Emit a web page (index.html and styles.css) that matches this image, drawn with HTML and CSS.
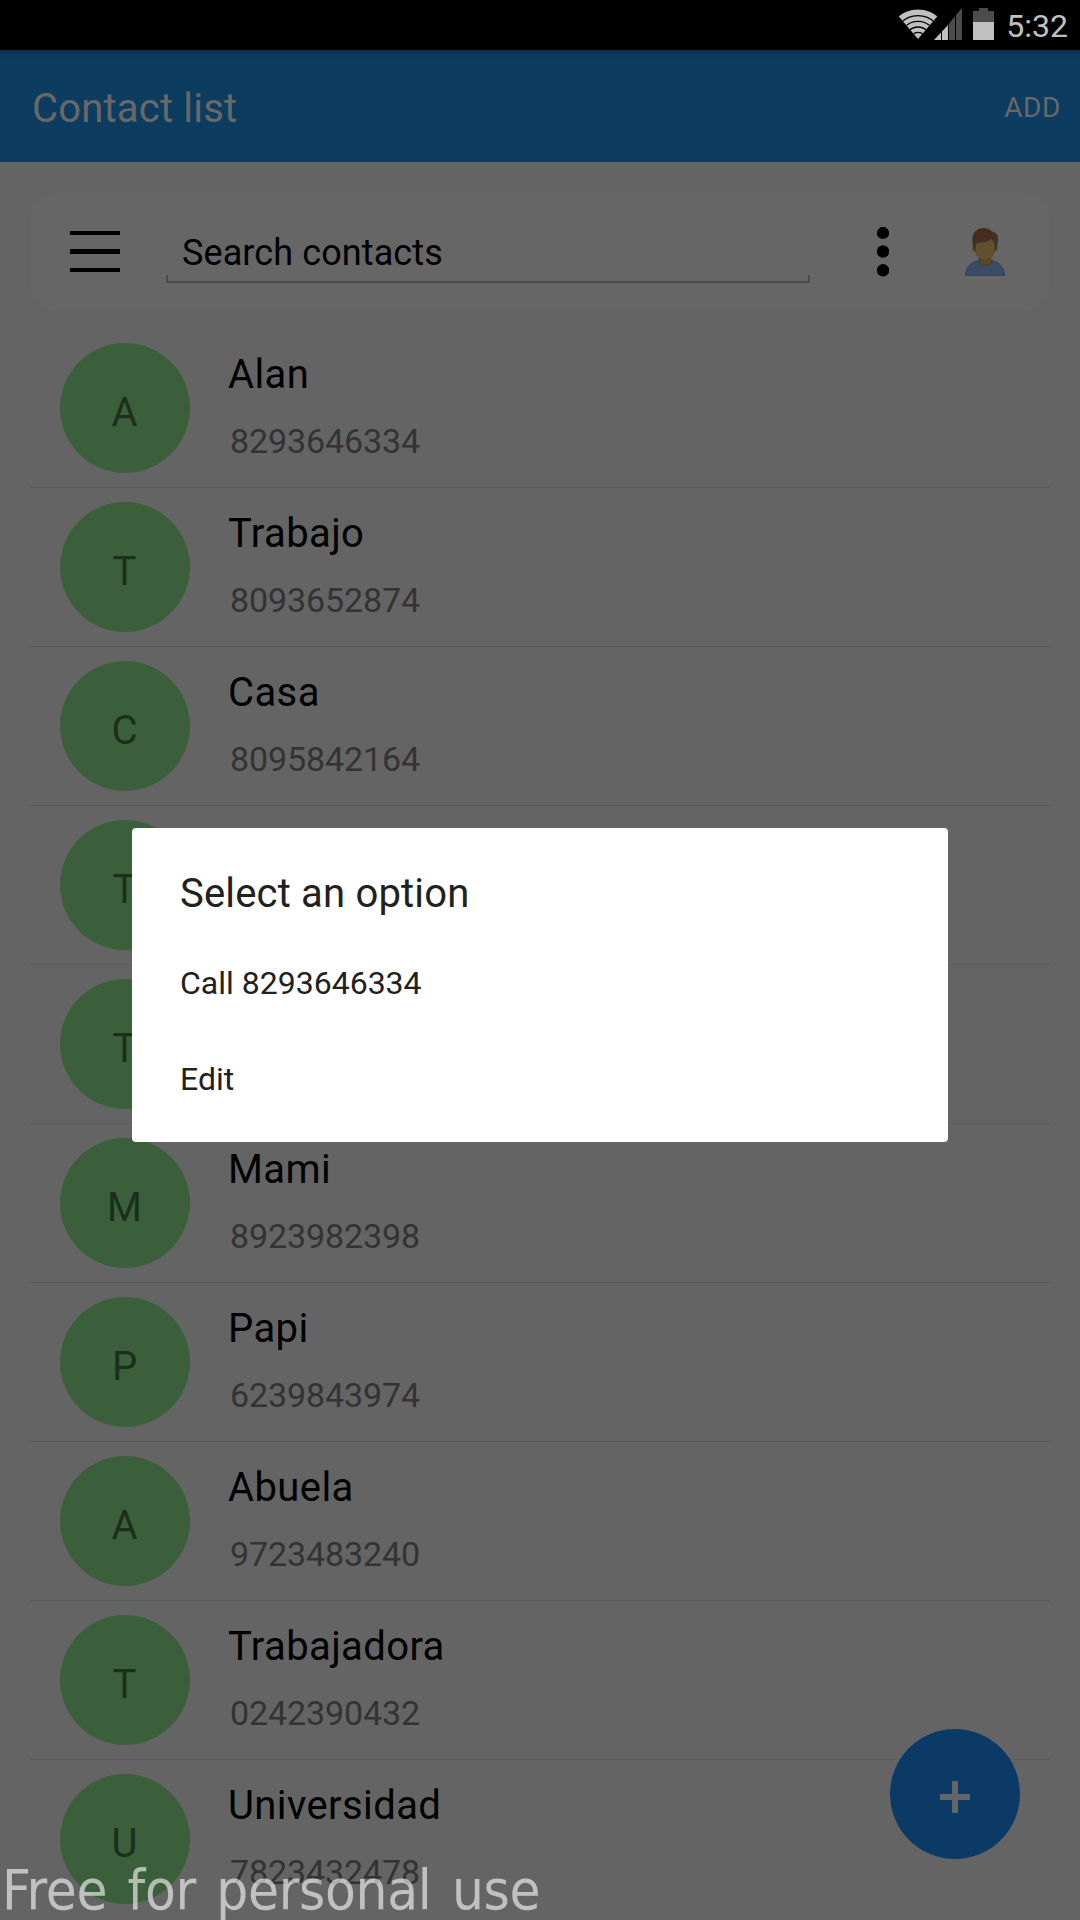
FILE: index.html
```html
<!DOCTYPE html>
<html lang="en">
<head>
<meta charset="utf-8">
<title>Contact list</title>
<link rel="stylesheet" href="styles.css">
</head>
<body>
<div class="screen">
  <div class="statusbar">
    <svg class="wifi" width="40" height="30" viewBox="0 0 40 30">
      <defs><clipPath id="fan"><path d="M20 30L0 6.5Q0 0 20 0Q40 0 40 6.5Z"/></clipPath></defs>
      <g clip-path="url(#fan)">
        <circle cx="20" cy="31" r="30.500" fill="#c0c0c0"/>
        <g fill="none" stroke="#000" stroke-width="1.3">
          <circle cx="20" cy="31" r="24.3"/><circle cx="20" cy="31" r="18.6"/><circle cx="20" cy="31" r="13"/><circle cx="20" cy="31" r="7.6"/>
        </g>
      </g>
    </svg>
    <svg class="signal" width="28" height="32" viewBox="0 0 28 32">
      <path fill="#c0c0c0" d="M0 32L7 24.5V32ZM8 23.5L14 17V32H8Z"/>
      <path fill="#4c4c4c" d="M15 15.5L21 8.5V32H15ZM22 7L28 0V32H22Z"/>
    </svg>
    <svg class="battery" width="21" height="32" viewBox="0 0 21 32">
      <path fill="#4c4c4c" d="M6 0H15V3H21V14H0V3H6Z"/>
      <path fill="#c0c0c0" d="M0 14H21V32H0Z"/>
    </svg>
    <span class="time">5:32</span>
  </div>
  <header class="appbar">
    <h1 class="title">Contact list</h1>
    <span class="add">ADD</span>
  </header>
  <main class="content">
    <div class="search">
      <svg class="menu" width="50" height="41" viewBox="0 0 50 41"><path d="M0 0H50V4H0ZM0 18H50V23H0ZM0 37H50V41H0Z"/></svg>
      <div class="field"><span class="query">Search contacts</span></div>
      <svg class="more" width="12" height="50" viewBox="0 0 12 50"><circle cx="6" cy="6" r="6.1"/><circle cx="6" cy="24.5" r="6.2"/><circle cx="6" cy="43.3" r="6.2"/></svg>
      <svg class="person" width="40" height="48" viewBox="0 0 40 48">
        <path d="M.4 47.6C.6 39.5 6 33.2 14 32.6H26C34 33.2 39.4 39.5 39.6 47.6Z" fill="#3b4b66" stroke="#2f4260" stroke-width=".9"/>
        <path d="M14.2 30V35C16 38.2 24.300 38.200 26 35V30Z" fill="#594825" stroke="#493b20" stroke-width=".7"/>
        <path d="M8.500 17Q6.300 19 7.500 22Q8.200 24 10 24L10.500 17ZM31.500 17Q33.600 19 32.400 22Q31.600 24 30 24L29.500 17Z" fill="#5c4a28"/>
        <path d="M10 11H30V20C30 26.500 25 32.200 20 32.200S10 26.500 10 20Z" fill="#614f2d" stroke="#51421f" stroke-width=".6"/>
        <path d="M9.800 23L8.600 18.500C7.500 14 7 9 9 5.500C11.500 1.500 15.500 .3 19 .3C23 .3 25.200 1.800 27 4C30.500 4.300 32.400 6.500 32.700 9.500C33 13 32 16 31.500 18.500L30.300 22V17.500C29.500 14.500 28.500 12.500 26 10.500C23.500 13 20.500 13.900 17 14C13 14 11 14.700 10.200 16.500Z" fill="#472d20" stroke="#3c281c" stroke-width=".5"/>
      </svg>
    </div>
    <ul class="list">
      <li class="row"><span class="avatar">A</span><div class="info"><span class="name">Alan</span><span class="phone">8293646334</span></div></li>
      <li class="row"><span class="avatar">T</span><div class="info"><span class="name">Trabajo</span><span class="phone">8093652874</span></div></li>
      <li class="row"><span class="avatar">C</span><div class="info"><span class="name">Casa</span><span class="phone">8095842164</span></div></li>
      <li class="row"><span class="avatar">T</span></li>
      <li class="row"><span class="avatar">T</span></li>
      <li class="row"><span class="avatar">M</span><div class="info"><span class="name">Mami</span><span class="phone">8923982398</span></div></li>
      <li class="row"><span class="avatar">P</span><div class="info"><span class="name">Papi</span><span class="phone">6239843974</span></div></li>
      <li class="row"><span class="avatar">A</span><div class="info"><span class="name">Abuela</span><span class="phone">9723483240</span></div></li>
      <li class="row"><span class="avatar">T</span><div class="info"><span class="name">Trabajadora</span><span class="phone">0242390432</span></div></li>
      <li class="row"><span class="avatar">U</span><div class="info"><span class="name">Universidad</span><span class="phone">7823432478</span></div></li>
    </ul>
  </main>
  <div class="fab"><svg width="30" height="32" viewBox="0 0 30 32"><path fill="#646464" d="M12 0H18V13H30V19H18V32H12V19H0V13H12Z"/></svg></div>
  <div class="dialog">
    <h2 class="heading">Select an option</h2>
    <span class="option">Call 8293646334</span>
    <span class="option">Edit</span>
  </div>
  <div class="watermark">Free for personal use</div>
</div>
</body>
</html>
```
FILE: styles.css
```css
* { box-sizing: border-box; }
body { margin: 0; font-family: Roboto, sans-serif; background: #646464; }
.screen { position: relative; width: 1080px; height: 1920px; overflow: hidden; background: #646464; }
svg { display: block; flex: none; }
.statusbar { display: flex; height: 50px; background: #000; padding: 8px 12px 0 0; justify-content: flex-end; }
.wifi { margin: 1px -4px 0 0; }
.signal { margin-right: 11px; }
.battery { margin-right: 12px; }
.time { font-size: 32px; line-height: 36px; color: #c0c0c0; white-space: nowrap; }
.appbar { display: flex; align-items: center; justify-content: space-between; height: 112px; padding: 4px 19px 0 32px; background: linear-gradient(#0b2c47, #0d3a5f 5px, #0c3c60 14px); color: #686868; }
.title { margin: 2px 0 0; font-size: 40px; font-weight: 400; line-height: 48px; letter-spacing: .2px; }
.add { font-size: 28px; line-height: 36px; letter-spacing: .6px; }
.content { padding: 30px 30px 0; }
.search { display: flex; height: 119px; border-radius: 30px; background: #666; padding-left: 40px; }
.menu { margin-top: 39px; }
.field { width: 644px; height: 91px; margin-left: 46px; padding: 40px 0 0 16px; line-height: 42px; font-size: 36px; letter-spacing: .1px;
  background: linear-gradient(#4c4c4c, #4c4c4c) 0 100% / 100% 2px no-repeat, linear-gradient(#4c4c4c, #4c4c4c) 0 100% / 2px 8px no-repeat, linear-gradient(#4c4c4c, #4c4c4c) 100% 100% / 2px 8px no-repeat; }
.more { margin: 35px 0 0 67px; }
.person { margin: 35.5px 0 0 76px; }
.list { list-style: none; margin: 18px 0 0; padding: 0; }
.row { display: flex; height: 159px; padding: 14px 30px 0; border-bottom: 1px solid #595959; }
.row:last-child { border-bottom: 0; }
.avatar { flex: none; width: 130px; height: 130px; border-radius: 50%; background: #3c5f3b; color: #1b2f1c; font-size: 40px; line-height: 139px; text-align: center; padding-right: 1px; }
.info { display: flex; flex-direction: column; margin-left: 38px; }
.name { font-size: 40px; line-height: 48px; margin-top: 8px; color: #000; letter-spacing: .4px; }
.phone { font-size: 34px; line-height: 40px; margin: 22px 0 0 2px; color: #333; letter-spacing: -.1px; }
.fab { position: absolute; left: 890px; top: 1729px; width: 130px; height: 130px; border-radius: 50%; background: #0b3a66; display: flex; align-items: center; justify-content: center; padding-top: 6px; }
.dialog { position: absolute; left: 132px; top: 828px; width: 816px; height: 314px; border-radius: 4px; background: #fff; color: #212121; padding: 42px 48px 0; display: flex; flex-direction: column; }
.heading { margin: 0 0 17px; font-size: 40px; font-weight: 400; line-height: 48px; letter-spacing: .18px; }
.option { font-size: 32px; line-height: 96px; }
.watermark { position: absolute; left: 2px; top: 1857px; font-family: "DejaVu Sans Condensed", "DejaVu Sans", sans-serif; font-stretch: condensed; font-size: 56px; line-height: 66px; letter-spacing: -.3px; word-spacing: 4.7px; color: rgba(255,255,255,.6); white-space: nowrap; }
```
